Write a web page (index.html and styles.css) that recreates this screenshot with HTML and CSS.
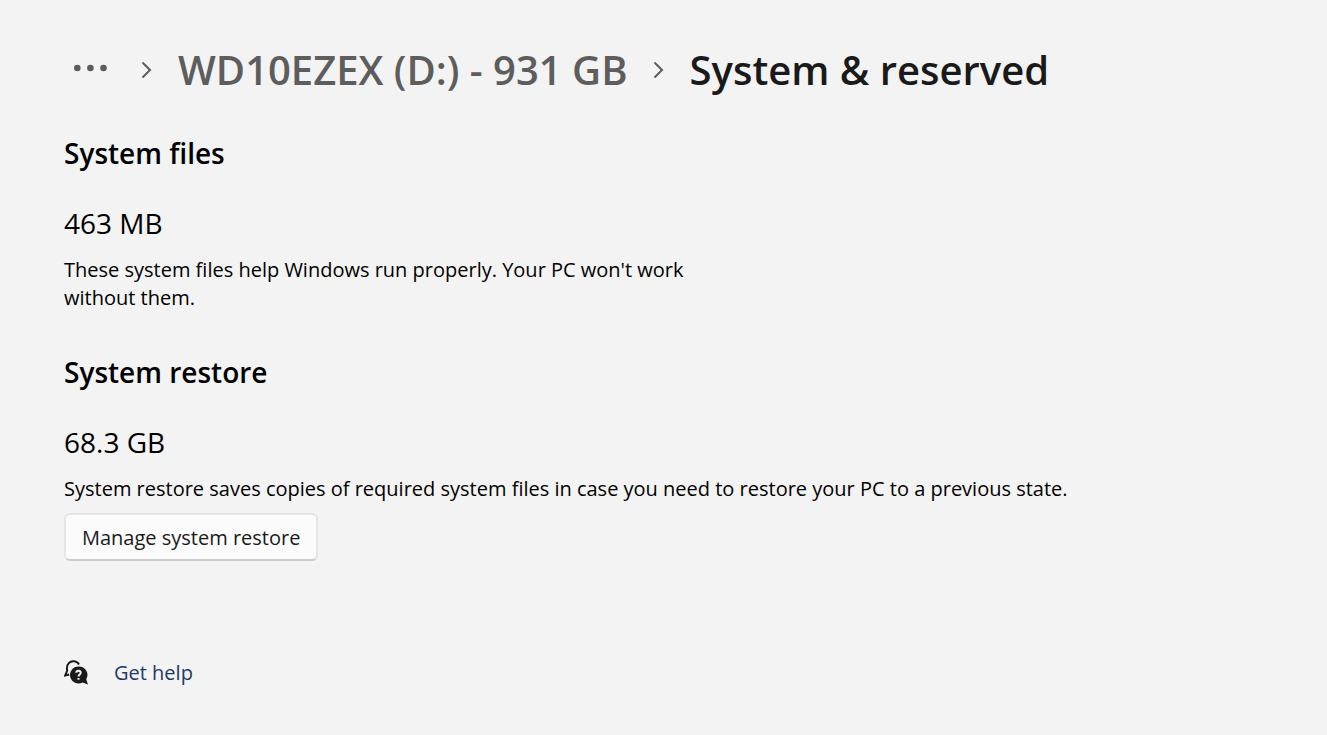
FILE: index.html
```html
<!DOCTYPE html>
<html lang="en">
<head>
  <meta charset="UTF-8" />
  <meta name="viewport" content="width=device-width, initial-scale=1" />
  <title>System &amp; reserved</title>
  <link rel="stylesheet" href="styles.css">
</head>
<body>
  <nav class="breadcrumb" aria-label="Breadcrumb">
    <button type="button" class="more" aria-label="More">
      <svg width="36" height="12" viewBox="0 0 36 12"><circle cx="5.300" cy="4" r="3.300" /><circle cx="18.400" cy="4" r="3.300" /><circle cx="31.500" cy="4" r="3.300" /></svg>
    </button>
    <svg class="chevron" width="12" height="18" viewBox="0 0 12 18"><path d="M1.500 1.500l7.500 7.500-7.500 7.500" /></svg>
    <a href="#" class="crumb">WD10EZEX (D:) - 931 GB</a>
    <svg class="chevron" width="12" height="18" viewBox="0 0 12 18"><path d="M1.500 1.500l7.500 7.500-7.500 7.500" /></svg>
    <h1>System &amp; reserved</h1>
  </nav>

  <main>
    <section>
      <h2>System files</h2>
      <p class="size">463 MB</p>
      <p class="info narrow">These system files help Windows run properly. Your PC won't work without them.</p>
    </section>
    <section>
      <h2>System restore</h2>
      <p class="size">68.3 GB</p>
      <p class="info">System restore saves copies of required system files in case you need to restore your PC to a previous state.</p>
      <button type="button" class="btn">Manage system restore</button>
    </section>
  </main>

  <footer class="help">
    <svg width="26" height="26" viewBox="0 0 26 26">
      <path class="outline" d="M15 4.500C13 .8 7.500.2 4.800 3.200 2.600 5.700 2.600 8 3.200 10.500L1.200 15.500l4-1" />
      <path class="bubble" d="M14.500 6.500a8.500 8.500 0 1 0 4 16l5.500 2-1.800-5.200a8.500 8.500 0 0 0-7.700-12.800z" />
      <path class="mark" d="M12.300 12.800c0-2.800 4.400-2.800 4.400 0 0 1.700-2.200 1.700-2.200 3.700M14.500 18v1.800" />
    </svg>
    <a href="#">Get help</a>
  </footer>
</body>
</html>
```
FILE: styles.css
```css
* {
  box-sizing: border-box;
}
body {
  margin: 0;
  padding: 40px 64px;
  font-family: 'Open Sans', 'Noto Sans', sans-serif;
  font-size: 20px;
  background: #f3f3f3;
  color: #000;
}

h1, h2, p {
  margin: 0;
}

.breadcrumb {
  display: flex;
  align-items: center;
  height: 60px;
}

.breadcrumb h1, .crumb {
  font-size: 40px;
  line-height: 60px;
  font-weight: 600;
  color: #1a1a1a;
  white-space: nowrap;
}

.breadcrumb .crumb {
  color: #5d5d5d;
  text-decoration: none;
}

.more {
  display: flex;
  padding: 0 8px;
  border: none;
  background: none;
  fill: #5d5d5d;
}

.chevron {
  margin: 0 25px;
  fill: none;
  stroke: #5d5d5d;
  stroke-width: 2;
}

h2 {
  font-size: 28px;
  line-height: 40px;
  font-weight: 600;
}

section {
  padding-top: 33px;
}

section + section {
  padding-top: 40px;
}

.size {
  margin-top: 30px;
  font-size: 28px;
  line-height: 40px;
}

.info {
  margin-top: 13px;
  line-height: 28px;
}

.narrow {
  max-width: 640px;
}

.btn {
  height: 48px;
  margin-top: 10px;
  padding: 0 16px;
  border: 2px solid #e5e5e5;
  border-bottom-color: #ccc;
  border-radius: 6px;
  background: #fbfbfb;
  color: #1a1a1a;
  font: inherit;
}

.help {
  display: flex;
  align-items: center;
  gap: 24px;
  margin-top: 98px;
}

.help a {
  color: #1f3a66;
  text-decoration: none;
}

.outline {
  fill: none;
  stroke: #1a1a1a;
  stroke-width: 2;
}

.bubble {
  fill: #1a1a1a;
}

.mark {
  fill: none;
  stroke: #f3f3f3;
  stroke-width: 2;
}
```
